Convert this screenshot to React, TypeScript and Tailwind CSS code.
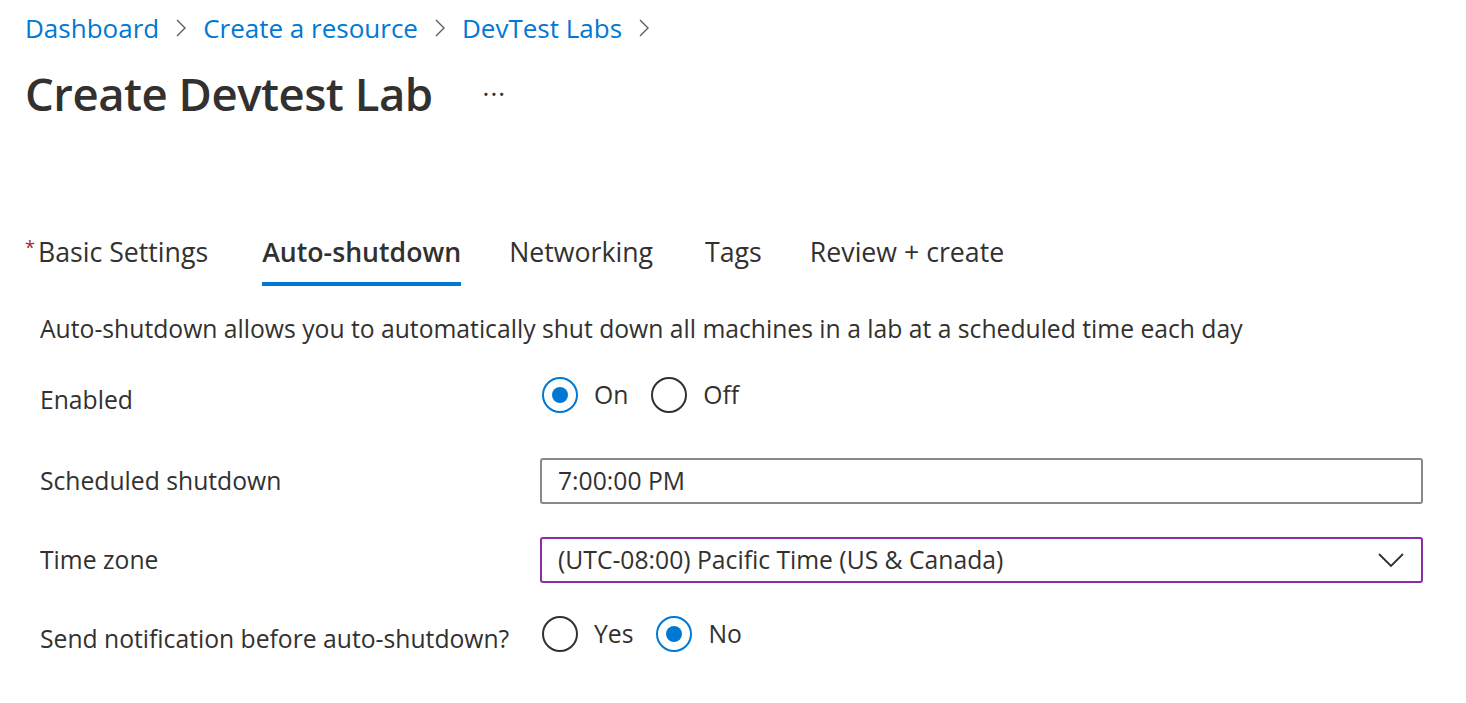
import { useState } from "react";

const FONT = "font-['Segoe_UI','Open_Sans',sans-serif]";

function Chevron() {
  return (
    <svg width="12" height="20" viewBox="0 0 12 20" className="mx-[16px]">
      <polyline points="2,2 10,10 2,18" fill="none" stroke="#605e5c" strokeWidth="1.4" />
    </svg>
  );
}

function Radio({ checked, label, onClick }: { checked: boolean; label: string; onClick: () => void }) {
  return (
    <button onClick={onClick} className="mr-[23px] flex items-center gap-[16px]">
      <span
        className={`flex h-[36px] w-[36px] items-center justify-center rounded-full border-2 ${
          checked ? "border-[#0078d4]" : "border-[#323130]"
        }`}
      >
        {checked && <span className="h-[16px] w-[16px] rounded-full bg-[#0078d4]" />}
      </span>
      <span className="text-[24.7px] text-[#323130]">{label}</span>
    </button>
  );
}

const TABS = [
  { label: "Basic Settings", gap: "mr-[54px]" },
  { label: "Auto-shutdown", gap: "mr-[48px]" },
  { label: "Networking", gap: "mr-[52px]" },
  { label: "Tags", gap: "mr-[48px]" },
  { label: "Review + create", gap: "" },
];

export default function App() {
  const [enabled, setEnabled] = useState(true);
  const [notify, setNotify] = useState(false);

  return (
    <div className={`${FONT} min-h-[703px] w-[1466px] bg-white text-[#323130]`}>
      <div className="pl-[25px] pr-[43px]">
        <nav className="flex h-[56px] items-center text-[26px] text-[#0078d4]">
          <a>Dashboard</a>
          <Chevron />
          <a>Create a resource</a>
          <Chevron />
          <a>DevTest Labs</a>
          <Chevron />
        </nav>

        <div className="flex h-[74px] items-center">
          <h1 className="text-[45.5px] font-semibold tracking-[-0.5px]">Create Devtest Lab</h1>
          <span className="ml-[50px] text-[26px] tracking-[1px] text-[#323130]">···</span>
        </div>

        <div className="mt-[92px] flex text-[26.7px]">
          {TABS.map((t, i) => (
            <div key={t.label} className={`${t.gap} flex flex-col`}>
              <div className="flex h-[60px] items-center">
                {i === 0 && <span className="mr-[3px] self-start pt-[12px] text-[18px] text-[#a4262c]">*</span>}
                <span className={i === 1 ? "font-semibold" : ""}>{t.label}</span>
              </div>
              <div className={`h-[4px] ${i === 1 ? "bg-[#0078d4]" : ""}`} />
            </div>
          ))}
        </div>

        <div className="pl-[15px] text-[24.7px]">
          <p className="mt-[20px] flex h-[46px] items-center">
            Auto-shutdown allows you to automatically shut down all machines in a lab at a scheduled time each day
          </p>

          <div className="mt-[20px] flex h-[46px] items-center">
            <div className="w-[502px] pt-[10px]">Enabled</div>
            <Radio checked={enabled} label="On" onClick={() => setEnabled(true)} />
            <Radio checked={!enabled} label="Off" onClick={() => setEnabled(false)} />
          </div>

          <div className="mt-[40px] flex h-[46px] items-center">
            <div className="w-[500px]">Scheduled shutdown</div>
            <div className="flex h-[46px] flex-1 items-center rounded-[3px] border-2 border-[#8a8886] px-[16px]">
              7:00:00 PM
            </div>
          </div>

          <div className="mt-[33px] flex h-[46px] items-center">
            <div className="w-[500px]">Time zone</div>
            <div className="flex h-[46px] flex-1 items-center justify-between rounded-[3px] border-2 border-[#8a2da5] px-[16px]">
              <span>(UTC-08:00) Pacific Time (US &amp; Canada)</span>
              <svg width="28" height="16" viewBox="0 0 28 16">
                <polyline points="2,2 14,14 26,2" fill="none" stroke="#323130" strokeWidth="1.8" />
              </svg>
            </div>
          </div>

          <div className="mt-[28px] flex h-[46px] items-center">
            <div className="w-[502px] pt-[10px]">Send notification before auto-shutdown?</div>
            <Radio checked={notify} label="Yes" onClick={() => setNotify(true)} />
            <Radio checked={!notify} label="No" onClick={() => setNotify(false)} />
          </div>
        </div>
      </div>
    </div>
  );
}
